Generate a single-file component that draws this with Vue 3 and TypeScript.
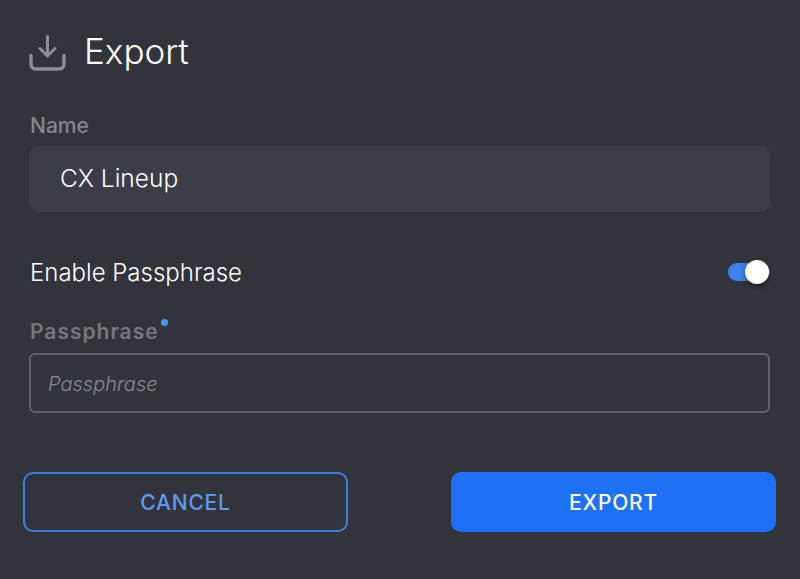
<script setup lang="ts">
import { ref } from "vue";

const name = ref("CX Lineup");
const passphrase = ref("");
const enabled = ref(true);
</script>

<template>
  <div class="export-page">
    <header class="header">
      <svg class="icon" width="37" height="36" viewBox="0 0 37 36" fill="none">
        <path d="M18.5 1.5V20M11 13.5L18.5 21L26 13.5" stroke="#8e8d99" stroke-width="3" stroke-linecap="round" stroke-linejoin="round" />
        <path d="M2 20.5V29C2 32 4 34 7 34H30C33 34 35 32 35 29V20.5" stroke="#8e8d99" stroke-width="3.4" stroke-linecap="round" />
      </svg>
      <h1 class="title">Export</h1>
    </header>

    <label class="field-label name-label" for="name">Name</label>
    <input id="name" v-model="name" class="name-input" type="text" />

    <div class="toggle-row">
      <span class="toggle-text">Enable Passphrase</span>
      <button class="toggle" :class="{ on: enabled }" type="button" @click="enabled = !enabled">
        <span class="knob"></span>
      </button>
    </div>

    <label class="field-label pass-label" for="passphrase">
      Passphrase<span class="required"></span>
    </label>
    <input id="passphrase" v-model="passphrase" class="pass-input" type="password" placeholder="Passphrase" />

    <div class="actions">
      <button class="btn cancel" type="button">CANCEL</button>
      <button class="btn primary" type="button">EXPORT</button>
    </div>
  </div>
</template>

<style>
html,
body {
  margin: 0;
  background: #33333b;
}
</style>

<style scoped>
.export-page {
  box-sizing: border-box;
  height: 579px;
  padding: 35px 30px 0 29px;
  background: #33333b;
  font-family: Inter, "Noto Sans", sans-serif;
  color: #ffffff;
  display: flex;
  flex-direction: column;
  overflow: hidden;
}

.header {
  display: flex;
  align-items: flex-start;
  gap: 18px;
  height: 36px;
}

.icon {
  flex: none;
}

.title {
  margin: 0;
  font-size: 35px;
  font-weight: 300;
  line-height: 32px;
}

.field-label {
  display: block;
  padding-left: 1px;
  color: #85858f;
  font-size: 21px;
  font-weight: 500;
  line-height: 24px;
}

.name-label {
  margin-top: 43px;
}

.name-input {
  box-sizing: border-box;
  height: 66px;
  margin-top: 8px;
  padding: 0 31px 2px;
  border: 0;
  border-radius: 10px;
  background: #3d3d47;
  color: #ffffff;
  font: 300 24.5px Inter, "Noto Sans", sans-serif;
  outline: none;
}

.toggle-row {
  display: flex;
  align-items: center;
  justify-content: space-between;
  height: 40px;
  margin-top: 40px;
  padding-left: 1px;
}

.toggle-text {
  font-size: 24px;
  font-weight: 300;
}

.toggle {
  position: relative;
  width: 42px;
  height: 18px;
  padding: 0;
  border: 0;
  border-radius: 9px;
  background: #5b5b66;
  cursor: pointer;
}

.toggle.on {
  background: #3b82ee;
}

.knob {
  position: absolute;
  top: -3px;
  left: 0;
  width: 24px;
  height: 24px;
  border-radius: 50%;
  background: #ffffff;
  box-shadow: 0 2px 5px rgba(0, 0, 0, 0.5);
}

.toggle.on .knob {
  left: 17px;
}

.pass-label {
  position: relative;
  margin-top: 27px;
  font-size: 21px;
  letter-spacing: 1px;
  font-weight: 600;
  color: #777780;
}

.required {
  display: inline-block;
  width: 7px;
  height: 7px;
  margin-left: 2px;
  border-radius: 50%;
  background: #4d94ff;
  vertical-align: 13px;
}

.pass-input {
  box-sizing: border-box;
  height: 60px;
  margin-top: 9px;
  padding: 2px 17px 0;
  border: 2px solid #62626e;
  border-radius: 6px;
  background: transparent;
  color: #ffffff;
  font: italic 300 20px Inter, "Noto Sans", sans-serif;
  outline: none;
}

.pass-input::placeholder {
  color: #8a8a94;
  opacity: 1;
}

.actions {
  display: flex;
  justify-content: space-between;
  margin: 59px -6px 0 -6px;
}

.btn {
  box-sizing: border-box;
  width: 325px;
  height: 60px;
  border-radius: 10px;
  font: 500 21px Inter, "Noto Sans", sans-serif;
  letter-spacing: 0.8px;
  cursor: pointer;
}

.cancel {
  border: 2px solid #3d7fdc;
  background: transparent;
  color: #5b9cf5;
}

.primary {
  border: 0;
  background: #1e70f4;
  color: #ffffff;
}
</style>
